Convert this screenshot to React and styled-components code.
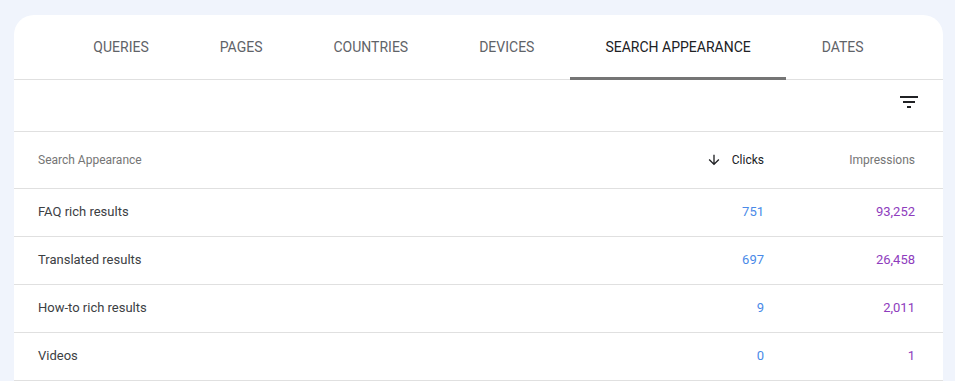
import React from 'react'
import styled, { createGlobalStyle } from 'styled-components';

const GlobalStyle = createGlobalStyle`
  body {
    margin: 0;
    background: #f0f4fc;
    font-family: Roboto, "Liberation Sans", Arial, sans-serif;
  }
`;

const tabs = ['Queries', 'Pages', 'Countries', 'Devices', 'Search appearance', 'Dates'];

const rows = [
  { name: 'FAQ rich results', clicks: '751', impressions: '93,252' },
  { name: 'Translated results', clicks: '697', impressions: '26,458' },
  { name: 'How-to rich results', clicks: '9', impressions: '2,011' },
  { name: 'Videos', clicks: '0', impressions: '1' },
];

const App = () => {
  return (
    <StPage>
      <GlobalStyle />
      <StCard>
        <StTabBar>
          {tabs.map((t) => (
            <StTab key={t} $active={t === 'Search appearance'}>{t}</StTab>
          ))}
        </StTabBar>
        <StToolbar>
          <StIconBtn aria-label="Filter">
            <svg width="24" height="24" viewBox="0 0 24 24" fill="#202124">
              <path d="M10 18h4v-2h-4v2zM3 6v2h18V6H3zm3 7h12v-2H6v2z" />
            </svg>
          </StIconBtn>
        </StToolbar>
        <StTable>
          <StHeadRow>
            <StHeadCell>Search Appearance</StHeadCell>
            <StHeadCell $align="right" $sorted>
              <svg width="16" height="16" viewBox="0 0 24 24" fill="#202124">
                <path d="M20 12l-1.41-1.41L13 16.17V4h-2v12.17l-5.58-5.59L4 12l8 8 8-8z" />
              </svg>
              Clicks
            </StHeadCell>
            <StHeadCell $align="right">Impressions</StHeadCell>
          </StHeadRow>
          {rows.map((r) => (
            <StRow key={r.name}>
              <StCell>{r.name}</StCell>
              <StCell $align="right" $color="#4a8ae8">{r.clicks}</StCell>
              <StCell $align="right" $color="#8e3cbd">{r.impressions}</StCell>
            </StRow>
          ))}
        </StTable>
      </StCard>
    </StPage>
  )
}

const StPage = styled.div`
  padding: 15px 12px 0 14px;
  height: 381px;
  box-sizing: border-box;
  overflow: hidden;
`;

const StCard = styled.div`
  width: 929px;
  background: #fff;
  border-radius: 20px 20px 0 0;
  min-height: 400px;
`;

const StTabBar = styled.div`
  display: flex;
  justify-content: center;
  height: 64px;
  border-bottom: 1px solid #e0e0e0;
`;

const StTab = styled.div`
  display: flex;
  align-items: center;
  padding: 1px 35.5px 0;
  margin-bottom: -1px;
  font-size: 14px;
  font-weight: 400;
  text-transform: uppercase;
  color: ${(p) => (p.$active ? '#202124' : '#5f6368')};
  border-bottom: 3px solid ${(p) => (p.$active ? '#757575' : 'transparent')};
  box-sizing: border-box;
  cursor: pointer;
`;

const StToolbar = styled.div`
  display: flex;
  justify-content: flex-end;
  align-items: flex-start;
  padding: 10px 22px 0 0;
  box-sizing: border-box;
  height: 52px;
  border-bottom: 1px solid #e0e0e0;
`;

const StIconBtn = styled.div`
  display: flex;
  width: 24px;
  height: 24px;
`;

const StTable = styled.div`
  display: flex;
  flex-direction: column;
`;

const StHeadRow = styled.div`
  display: grid;
  grid-template-columns: 1fr 150px 151px;
  height: 56px;
  align-items: center;
  padding: 0 28px 0 24px;
  border-bottom: 1px solid #e0e0e0;
`;

const StHeadCell = styled.div`
  display: flex;
  align-items: center;
  justify-content: ${(p) => (p.$align === 'right' ? 'flex-end' : 'flex-start')};
  gap: 10px;
  font-size: 12px;
  color: ${(p) => (p.$sorted ? '#202124' : '#757575')};
`;

const StRow = styled.div`
  display: grid;
  grid-template-columns: 1fr 150px 151px;
  height: 47px;
  box-sizing: border-box;
  height: 48px;
  align-items: center;
  padding: 0 28px 2px 24px;
  border-bottom: 1px solid #e0e0e0;
`;

const StCell = styled.div`
  text-align: ${(p) => p.$align || 'left'};
  font-size: 13px;
  line-height: 14px;
  color: ${(p) => p.$color || '#3c4043'};
`;

export default App;
